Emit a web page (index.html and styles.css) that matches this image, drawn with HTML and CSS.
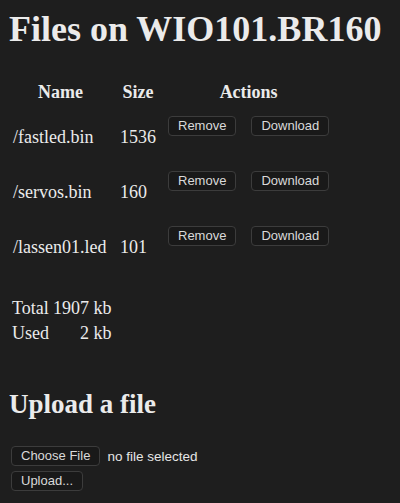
FILE: index.html
```html
<!DOCTYPE html>
<html lang="en">
<head>
    <meta charset="UTF-8">
    <meta name="viewport" content="width=device-width, initial-scale=1.0">
    <title>Files on WIO101.BR160</title>
    <link rel="stylesheet" href="styles.css">
</head>
<body>
    <h1>Files on WIO101.BR160</h1>

    <table class="files">
        <tr>
            <th class="name">Name</th>
            <th>Size</th>
            <th colspan="2">Actions</th>
        </tr>
        <tr>
            <td class="name">/fastled.bin</td>
            <td>1536</td>
            <td class="act"><button>Remove</button></td>
            <td class="act"><button>Download</button></td>
        </tr>
        <tr>
            <td class="name">/servos.bin</td>
            <td>160</td>
            <td class="act"><button>Remove</button></td>
            <td class="act"><button>Download</button></td>
        </tr>
        <tr>
            <td class="name">/lassen01.led</td>
            <td>101</td>
            <td class="act"><button>Remove</button></td>
            <td class="act"><button>Download</button></td>
        </tr>
    </table>

    <table class="usage">
        <tr><td>Total</td><td class="num">1907 kb</td></tr>
        <tr><td>Used</td><td class="num">2 kb</td></tr>
    </table>

    <h2>Upload a file</h2>
    <form class="upload">
        <div class="row">
            <button type="button">Choose File</button>
            <span class="picked">no file selected</span>
        </div>
        <div class="row">
            <button type="button">Upload...</button>
        </div>
    </form>
</body>
</html>
```

FILE: styles.css
```css
body {
    margin: 9px;
    background-color: #1e1e1e;
    color: #ebebeb;
    font-family: "Liberation Serif", "Times New Roman", serif;
    font-size: 18px;
}
h1 {
    font-size: 36px;
    line-height: 41px;
    margin: 0;
}
h2 {
    font-size: 27px;
    line-height: 31px;
    margin: 43px 0 0;
}
button {
    font-family: "Liberation Sans", Arial, sans-serif;
    font-size: 13px;
    line-height: 16px;
    color: #dadada;
    background-color: #191919;
    border: 1px solid #3c3c3c;
    border-radius: 4px;
    padding: 1px 9px;
    margin: 0;
}
.files {
    border-spacing: 0;
    margin-top: 25px;
}
.files th,
.files td {
    padding: 0 8px 0 4px;
}
.files th {
    height: 35px;
}
.files td {
    height: 55px;
}
.files .name {
    width: 95px;
}
.files .act {
    vertical-align: middle;
}
.files .act:first-of-type {
    padding-left: 5px;
}
.files .act + .act {
    padding-left: 7px;
}
.files .act button {
    margin-bottom: 26px;
}
.usage {
    border-spacing: 0;
    margin-top: 21px;
}
.usage td {
    padding: 0 0 0 3px;
    line-height: 25px;
}
.usage .num {
    padding-left: 4px;
    text-align: right;
}
.upload {
    margin-top: 26px;
    padding-left: 2px;
}
.upload .row {
    display: flex;
    align-items: center;
    gap: 7px;
    margin-bottom: 5px;
}
.picked {
    font-family: "Liberation Sans", Arial, sans-serif;
    font-size: 13.5px;
    color: #e6e6e6;
}
```
